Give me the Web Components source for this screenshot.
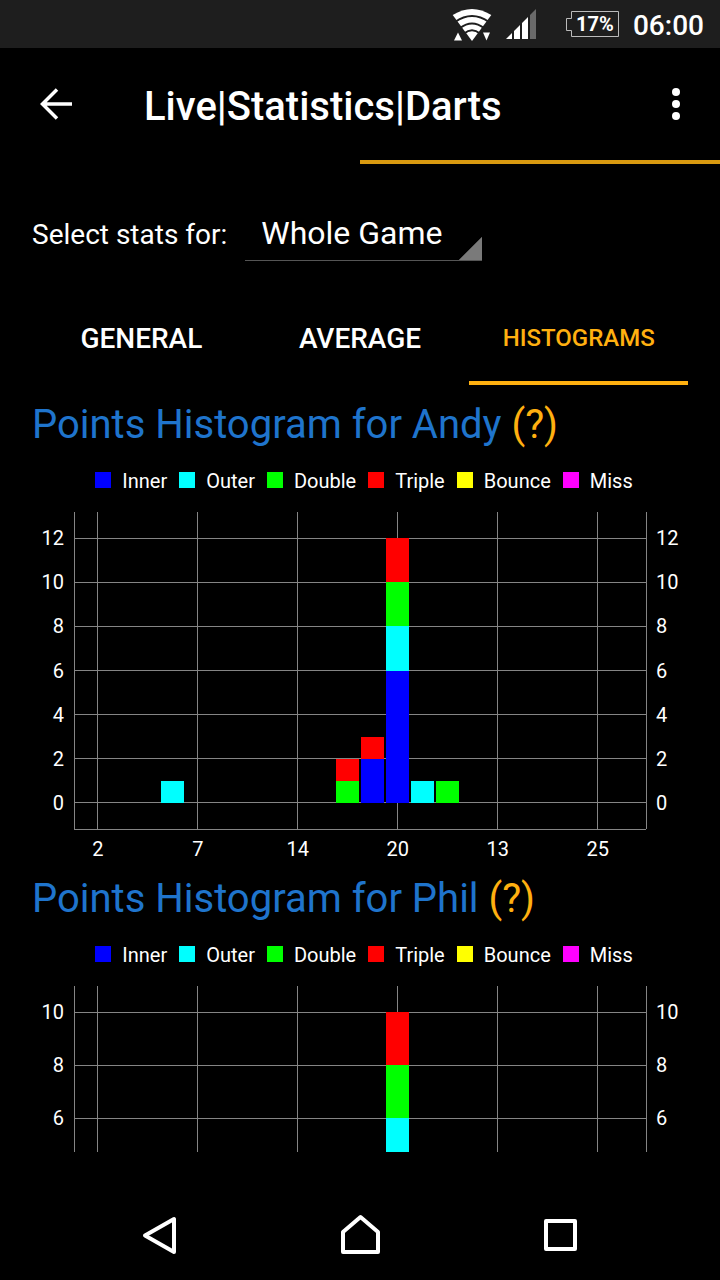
<!DOCTYPE html>
<html lang="en">
  <head>
    <meta charset="UTF-8" />
    <meta name="viewport" content="width=device-width, initial-scale=1.0" />
    <title>Live|Statistics|Darts</title>
    <style>
      :root {
        --accent: #ffb010;
        --heading: #1f74cc;
        --grid: #858585;
      }
      body {
        margin: 0;
        background: #000;
        color: #fff;
        font-family: Roboto, "Noto Sans", sans-serif;
      }
    </style>
  </head>
  <body>
    <darts-app>
      <status-bar slot="top" time="06:00" battery="17%"></status-bar>
      <app-bar slot="top">Live|Statistics|Darts</app-bar>
      <page-strip slot="top"></page-strip>
      <stats-picker slot="top" label="Select stats for:">Whole Game</stats-picker>
      <tab-bar slot="top">
        <tab-item>GENERAL</tab-item>
        <tab-item>AVERAGE</tab-item>
        <tab-item active>HISTOGRAMS</tab-item>
      </tab-bar>

      <points-histogram
        max="12"
        bars='{"3":{"outer":1},"10":{"double":1,"triple":1},"11":{"inner":2,"triple":1},"12":{"inner":6,"outer":2,"double":2,"triple":2},"13":{"outer":1},"14":{"double":1}}'
      >Points Histogram for Andy</points-histogram>
      <points-histogram
        max="10"
        bars='{"12":{"inner":4,"outer":2,"double":2,"triple":2}}'
      >Points Histogram for Phil</points-histogram>

      <nav-bar slot="bottom"></nav-bar>
    </darts-app>

    <template id="app">
      <style>
        :host {
          display: flex;
          flex-direction: column;
          height: 100vh;
        }
        main {
          flex: 1;
          min-height: 0;
          overflow-y: auto;
          scrollbar-width: none;
          margin: 14px 32px 32px;
        }
      </style>
      <slot name="top"></slot>
      <main><slot></slot></main>
      <slot name="bottom"></slot>
    </template>

    <template id="status">
      <style>
        :host {
          display: flex;
          align-items: center;
          justify-content: flex-end;
          height: 48px;
          padding-right: 16px;
          background: #1e1e1e;
          font-size: 28px;
          font-weight: 500;
        }
        .wifi { margin-right: 14px; }
        .signal { margin-right: 30px; }
        .battery {
          display: grid;
          align-items: center;
          margin-right: 14px;
          font-size: 20px;
          font-weight: 700;
        }
        .battery > * { grid-area: 1 / 1; }
        .battery span { padding-left: 10px; }
        .time { padding-top: 2px; }
      </style>
      <svg class="wifi" width="40" height="34" viewBox="0 0 40 34">
        <path d="M20 34L0.700 8Q20 -4 39.300 8Z" fill="#fff" />
        <path d="M3 15Q20 3 37 15M8 21Q20 12 32 21M12 26.500Q20 20 28 26.500" fill="none" stroke="#1e1e1e" stroke-width="2" />
        <path d="M2 33.500L6 25.500L10 33.500ZM31 25.500H38L34.500 33.500Z" fill="#fff" />
      </svg>
      <svg class="signal" width="30" height="30" viewBox="0 0 30 30" fill="#fff">
        <path d="M0 30L6 24V30ZM8 22L14 16V30H8ZM16 14L22 8V30H16Z" />
        <path d="M24 6L30 0V30H24Z" fill="#6a6a6a" />
      </svg>
      <div class="battery">
        <svg width="53" height="26" viewBox="0 0 53 26" fill="none" stroke="#bbb">
          <path d="M5.500 .500H52.500V25.500H5.500V19.500H.500V7.500H5.500Z" />
        </svg>
        <span class="level"></span>
      </div>
      <span class="time"></span>
    </template>

    <template id="bar">
      <style>
        :host {
          display: flex;
          align-items: center;
          height: 112px;
          padding: 0 20px 0 32px;
        }
        button {
          display: flex;
          padding: 0;
          border: none;
          background: none;
        }
        h1 {
          flex: 1;
          margin: 6px 0 0 64px;
          font-size: 40px;
          font-weight: 500;
          line-height: 48px;
        }
      </style>
      <button aria-label="Back">
        <svg width="48" height="48" viewBox="0 0 48 48" fill="none" stroke="#fff" stroke-width="4">
          <path d="M40 24H11M25 9.500L10.500 24L25 38.500" stroke-width="3.500" />
        </svg>
      </button>
      <h1><slot></slot></h1>
      <button aria-label="More options">
        <svg width="48" height="48" viewBox="0 0 48 48" fill="#fff">
          <circle cx="24" cy="12" r="4" />
          <circle cx="24" cy="24" r="4" />
          <circle cx="24" cy="36" r="4" />
        </svg>
      </button>
    </template>

    <template id="strip">
      <style>
        :host { display: flex; justify-content: flex-end; }
        div { width: 50%; height: 4px; background: #d99a10; }
      </style>
      <div></div>
    </template>

    <template id="picker">
      <style>
        :host {
          display: flex;
          align-items: center;
          gap: 18px;
          padding: 44px 32px 0;
        }
        label { font-size: 28px; }
        select {
          appearance: none;
          width: 237px;
          height: 53px;
          padding: 0 16px 2px;
          border: none;
          border-bottom: 1px solid #555;
          border-radius: 0;
          outline: none;
          color: inherit;
          font: inherit;
          font-size: 32px;
          background: linear-gradient(135deg, transparent 50%, #7a7a7a calc(50% + 1px)) right bottom / 24px 24px no-repeat;
        }
      </style>
      <label for="stats"></label>
      <select id="stats"><option></option></select>
    </template>

    <template id="tabs">
      <style>
        :host {
          display: grid;
          grid-template-columns: repeat(3, 1fr);
          padding: 28px 32px 0;
        }
      </style>
      <slot></slot>
    </template>

    <template id="tab">
      <style>
        button {
          width: 100%;
          height: 96px;
          padding: 6px 0 0;
          border: none;
          border-bottom: 4px solid transparent;
          background: none;
          color: inherit;
          font: inherit;
          font-size: 28px;
          font-weight: 500;
        }
        :host([active]) button {
          border-color: var(--accent);
          color: var(--accent);
          font-size: 24px;
        }
      </style>
      <button role="tab"><slot></slot></button>
    </template>

    <template id="histogram">
      <style>
        :host { display: block; height: 474px; }
        h2 {
          margin: 0;
          color: var(--heading);
          font-size: 40px;
          font-weight: 400;
          line-height: 52px;
        }
        button {
          padding: 0;
          border: none;
          background: none;
          color: var(--accent);
          font: inherit;
        }
        .legend {
          display: flex;
          justify-content: center;
          gap: 12px;
          margin: 18px 0;
          padding-left: 8px;
          font-size: 20px;
          line-height: 25px;
        }
        .legend span { display: flex; gap: 11px; }
        .legend i { width: 16px; height: 16px; margin-top: 3px; }
        .chart {
          display: grid;
          grid-template-columns: 32px 1fr 32px;
          column-gap: 10px;
        }
        svg {
          display: block;
          width: 100%;
          height: 317px;
          overflow: visible;
        }
        line { stroke: var(--grid); shape-rendering: crispEdges; }
        rect { shape-rendering: crispEdges; }
        text { fill: #fff; font-size: 20px; }
      </style>
      <h2><slot></slot> <button aria-label="Help">(?)</button></h2>
      <div class="legend"></div>
      <div class="chart">
        <svg class="left"></svg>
        <svg class="plot"></svg>
        <svg class="right"></svg>
      </div>
    </template>

    <template id="nav">
      <style>
        :host {
          display: flex;
          justify-content: center;
          gap: 152px;
          padding: 28px 0 20px;
        }
        button {
          display: flex;
          padding: 0;
          border: none;
          background: none;
        }
      </style>
      <button aria-label="Back">
        <svg width="48" height="48" viewBox="0 0 48 48" fill="none" stroke="#fff" stroke-width="4" stroke-linejoin="round">
          <path d="M38 7V40L9 23.500Z" />
        </svg>
      </button>
      <button aria-label="Home">
        <svg width="48" height="48" viewBox="0 0 48 48" fill="none" stroke="#fff" stroke-width="4" stroke-linejoin="round">
          <path d="M7 40V20L24.500 5L42 20V40Z" />
        </svg>
      </button>
      <button aria-label="Recent apps">
        <svg width="48" height="48" viewBox="0 0 48 48" fill="none" stroke="#fff" stroke-width="4" stroke-linejoin="round">
          <path d="M10 9H39V37H10Z" />
        </svg>
      </button>
    </template>

    <script>
      class BaseElement extends HTMLElement {
        constructor(tmplId) {
          super();
          const tmpl = document.getElementById(tmplId);
          this.attachShadow({ mode: "open" }).appendChild(tmpl.content.cloneNode(true));
        }
        $(selector) {
          return this.shadowRoot.querySelector(selector);
        }
      }

      class StatusBar extends BaseElement {
        constructor() {
          super("status");
          this.$(".level").textContent = this.getAttribute("battery");
          this.$(".time").textContent = this.getAttribute("time");
        }
      }

      class StatsPicker extends BaseElement {
        constructor() {
          super("picker");
          this.$("label").textContent = this.getAttribute("label");
          // a select can't take slotted text, so copy it into the option
          this.$("option").textContent = this.textContent;
        }
      }

      const SERIES = {
        inner: ["Inner", "#00f"],
        outer: ["Outer", "#0ff"],
        double: ["Double", "#0f0"],
        triple: ["Triple", "#f00"],
        bounce: ["Bounce", "#ff0"],
        miss: ["Miss", "#f0f"],
      };
      const X_LABELS = [2, 7, 14, 20, 13, 25];
      const X_STEP = 4;
      const X_MIN = -0.95;
      const X_MAX = 21.93;
      const BAR_WIDTH = 0.92;

      class PointsHistogram extends BaseElement {
        constructor() {
          super("histogram");
          this.max = Number(this.getAttribute("max"));
          this.bars = JSON.parse(this.getAttribute("bars"));
          this.drawLegend();
          this.drawGrid();
          this.drawBars();
        }

        x(value) {
          return ((value - X_MIN) / (X_MAX - X_MIN)) * 100 + "%";
        }

        // the value axis has 10% of room above and below
        y(value) {
          return ((this.max * 1.1 - value) / (this.max * 1.2)) * 100 + "%";
        }

        add(parent, name, attrs, text) {
          const el = document.createElementNS("http://www.w3.org/2000/svg", name);
          for (const key in attrs) el.setAttribute(key, attrs[key]);
          if (text !== undefined) el.textContent = text;
          this.$(parent).appendChild(el);
        }

        drawLegend() {
          this.$(".legend").innerHTML = Object.values(SERIES)
            .map(([name, color]) => `<span><i style="background:${color}"></i>${name}</span>`)
            .join("");
        }

        drawGrid() {
          for (let v = 0; v <= this.max; v += 2) {
            const y = this.y(v);
            this.add(".plot", "line", { x1: 0, x2: "100%", y1: y, y2: y });
            this.add(".left", "text", { x: "100%", y, dy: 7, "text-anchor": "end" }, v);
            this.add(".right", "text", { x: 0, y, dy: 7 }, v);
          }
          X_LABELS.forEach((label, i) => {
            const x = this.x(i * X_STEP);
            this.add(".plot", "line", { x1: x, x2: x, y1: 0, y2: "100%" });
            this.add(".plot", "text", { x, y: "100%", dy: 27, "text-anchor": "middle" }, label);
          });
          this.add(".plot", "line", { x1: 0, x2: 0, y1: 0, y2: "100%" });
          this.add(".plot", "line", { x1: "100%", x2: "100%", y1: 0, y2: "100%" });
          this.add(".plot", "line", { x1: 0, x2: "100%", y1: "100%", y2: "100%" });
        }

        drawBars() {
          for (const index in this.bars) {
            let total = 0;
            for (const key in this.bars[index]) {
              const count = this.bars[index][key];
              total += count;
              this.add(".plot", "rect", {
                x: this.x(Number(index) - BAR_WIDTH / 2),
                y: this.y(total),
                width: (BAR_WIDTH / (X_MAX - X_MIN)) * 100 + "%",
                height: (count / (this.max * 1.2)) * 100 + "%",
                fill: SERIES[key][1],
              });
            }
          }
        }
      }

      customElements.define("darts-app", class extends BaseElement { constructor() { super("app"); } });
      customElements.define("app-bar", class extends BaseElement { constructor() { super("bar"); } });
      customElements.define("page-strip", class extends BaseElement { constructor() { super("strip"); } });
      customElements.define("tab-bar", class extends BaseElement { constructor() { super("tabs"); } });
      customElements.define("tab-item", class extends BaseElement { constructor() { super("tab"); } });
      customElements.define("nav-bar", class extends BaseElement { constructor() { super("nav"); } });
      customElements.define("status-bar", StatusBar);
      customElements.define("stats-picker", StatsPicker);
      customElements.define("points-histogram", PointsHistogram);
    </script>
  </body>
</html>
